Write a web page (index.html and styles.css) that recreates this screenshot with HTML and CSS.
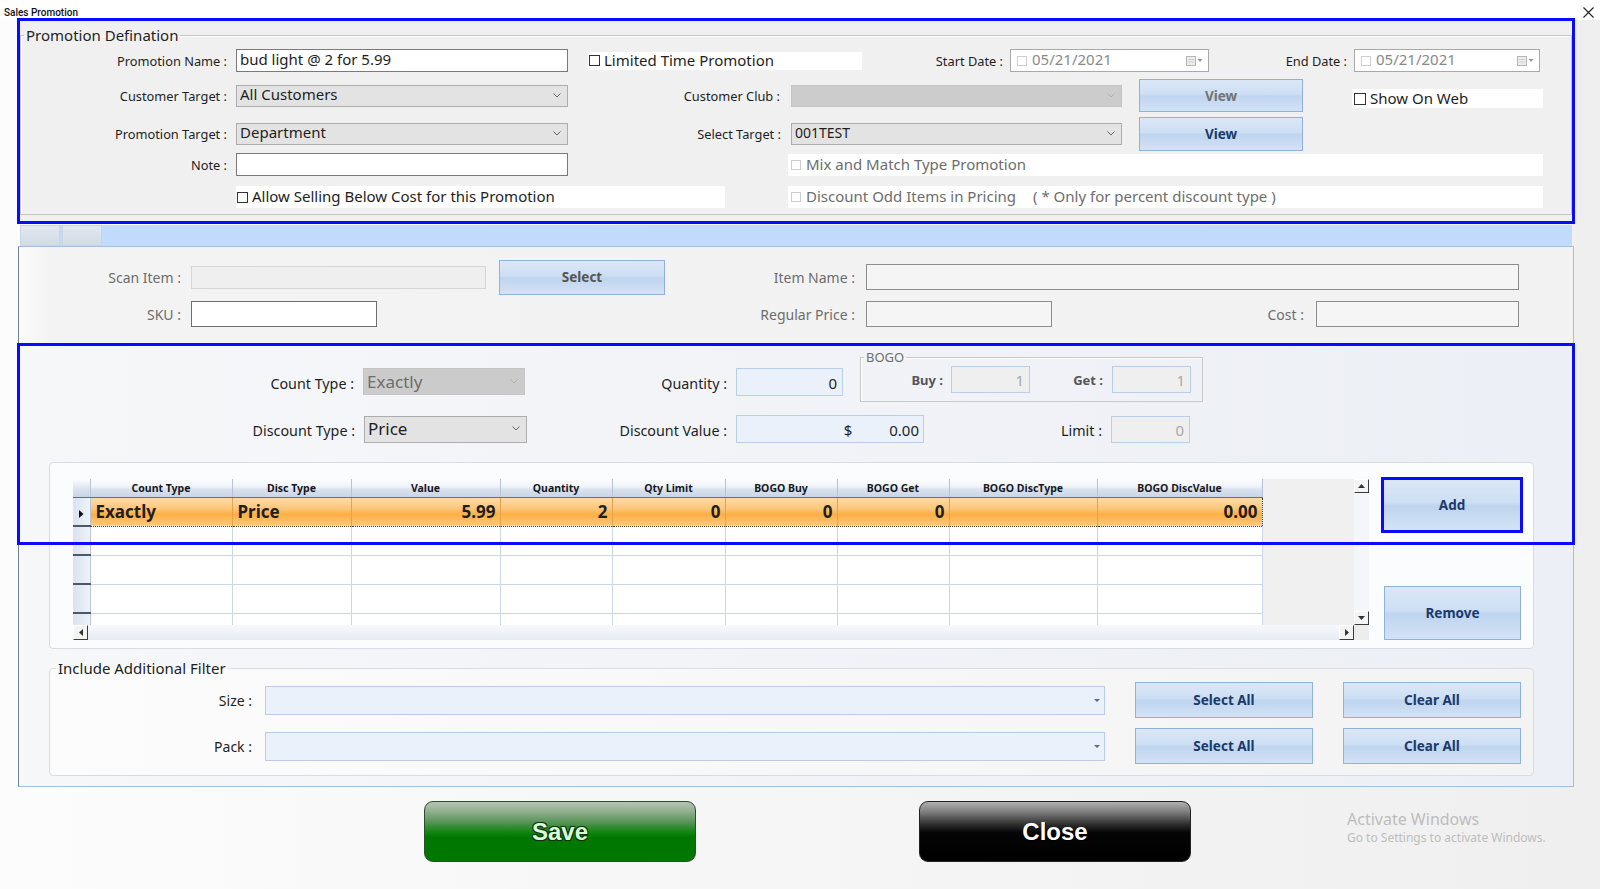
FILE: index.html
```html
<!DOCTYPE html>
<html lang="en">
<head>
  <meta charset="UTF-8">
  <title>Sales Promotion</title>
  <link rel="stylesheet" href="styles.css">
</head>
<body>
  <div class="titlebar">
    <span class="title">Sales Promotion</span>
    <svg class="close-x" width="11" height="11" viewBox="0 0 11 11"><path d="M0.5 0.5 L10.5 10.5 M10.5 0.5 L0.5 10.5" stroke="#222" stroke-width="1.1"/></svg>
  </div>

  <div class="top">
    <fieldset class="group">
      <legend>Promotion Defination</legend>

      <div class="row r1">
        <span class="lbl lbl-name">Promotion Name :</span>
        <div class="txt in-name">bud light @ 2 for 5.99</div>
        <div class="chk chk-limited"><span class="box"></span>Limited Time Promotion</div>
        <span class="lbl lbl-start">Start Date :</span>
        <div class="date date-start">
          <span class="box off"></span><span class="date-val">05/21/2021</span>
          <svg class="cal" width="18" height="10" viewBox="0 0 18 10"><rect x="0.5" y="0.5" width="9" height="9" fill="#ececec" stroke="#b5b5b5"/><path d="M2 3.5 H8 M2 6 H8" stroke="#cfcfcf"/><path d="M11.5 3 H16.5 L14 6 Z" fill="#9a9a9a"/></svg>
        </div>
        <span class="lbl lbl-end">End Date :</span>
        <div class="date date-end">
          <span class="box off"></span><span class="date-val">05/21/2021</span>
          <svg class="cal" width="18" height="10" viewBox="0 0 18 10"><rect x="0.5" y="0.5" width="9" height="9" fill="#ececec" stroke="#b5b5b5"/><path d="M2 3.5 H8 M2 6 H8" stroke="#cfcfcf"/><path d="M11.5 3 H16.5 L14 6 Z" fill="#9a9a9a"/></svg>
        </div>
      </div>

      <div class="row r2">
        <span class="lbl lbl-name">Customer Target :</span>
        <div class="combo in-name">All Customers
          <svg class="chev" width="8" height="5" viewBox="0 0 8 5"><path d="M0.5 0.5 L4 4 L7.5 0.5" fill="none" stroke="#666"/></svg>
        </div>
        <span class="lbl lbl-club">Customer Club :</span>
        <div class="combo off in-club">
          <svg class="chev" width="8" height="5" viewBox="0 0 8 5"><path d="M0.5 0.5 L4 4 L7.5 0.5" fill="none" stroke="#b0b0b0"/></svg>
        </div>
        <div class="btn dim btn-view">View</div>
        <div class="chk chk-web"><span class="box"></span>Show On Web</div>
      </div>

      <div class="row r3">
        <span class="lbl lbl-name">Promotion Target :</span>
        <div class="combo in-name">Department
          <svg class="chev" width="8" height="5" viewBox="0 0 8 5"><path d="M0.5 0.5 L4 4 L7.5 0.5" fill="none" stroke="#666"/></svg>
        </div>
        <span class="lbl lbl-target">Select Target :</span>
        <div class="combo in-club small">001TEST
          <svg class="chev" width="8" height="5" viewBox="0 0 8 5"><path d="M0.5 0.5 L4 4 L7.5 0.5" fill="none" stroke="#666"/></svg>
        </div>
        <div class="btn btn-view tall">View</div>
      </div>

      <div class="row r4">
        <span class="lbl lbl-name">Note :</span>
        <div class="txt in-name"></div>
        <div class="chk off chk-mix"><span class="box"></span>Mix and Match Type Promotion</div>
      </div>

      <div class="row r5">
        <div class="chk chk-allow"><span class="box"></span>Allow Selling Below Cost for this Promotion</div>
        <div class="chk off chk-odd"><span class="box"></span>Discount Odd Items in Pricing<span class="note">( * Only for percent discount type )</span></div>
      </div>
    </fieldset>
  </div>

  <div class="tabstrip">
    <span class="tab"></span>
    <span class="tab"></span>
  </div>

  <div class="tabpage">
    <div class="scan">
      <div class="row ra">
        <span class="slbl w162">Scan Item :</span>
        <div class="sbox off in-scan"></div>
        <div class="btn grey btn-select">Select</div>
        <span class="slbl w190">Item Name :</span>
        <div class="sbox in-item"></div>
      </div>
      <div class="row rb">
        <span class="slbl w162">SKU :</span>
        <div class="sbox white in-sku"></div>
        <span class="slbl w478">Regular Price :</span>
        <div class="sbox in-reg"></div>
        <span class="slbl w252">Cost :</span>
        <div class="sbox in-cost"></div>
      </div>
    </div>

    <div class="promo">
      <div class="row rc">
        <span class="plbl lbl-count">Count Type :</span>
        <div class="pcombo off cb-count">Exactly
          <svg class="chev" width="8" height="5" viewBox="0 0 8 5"><path d="M0.5 0.5 L4 4 L7.5 0.5" fill="none" stroke="#b0b0b0"/></svg>
        </div>
        <span class="plbl lbl-qty">Quantity :</span>
        <div class="num in-qty">0</div>
        <fieldset class="bogo">
          <legend>BOGO</legend>
          <div class="row bogo-row">
            <span class="blbl w82">Buy :</span>
            <div class="num dis in-buy">1</div>
            <span class="blbl w73">Get :</span>
            <div class="num dis in-get">1</div>
          </div>
        </fieldset>
      </div>

      <div class="row rd">
        <span class="plbl lbl-disc">Discount Type :</span>
        <div class="pcombo cb-disc">Price
          <svg class="chev" width="8" height="5" viewBox="0 0 8 5"><path d="M0.5 0.5 L4 4 L7.5 0.5" fill="none" stroke="#666"/></svg>
        </div>
        <span class="plbl lbl-dval">Discount Value :</span>
        <div class="num in-dval"><span class="cur">$</span>0.00</div>
        <span class="plbl lbl-limit">Limit :</span>
        <div class="num dis in-limit">0</div>
      </div>

      <div class="gridbox">
        <div class="grid">
          <div class="grid-main">
            <div class="grid-cells">
              <table class="dg">
                <colgroup>
                  <col style="width:17px"><col style="width:142px"><col style="width:119px"><col style="width:149px"><col style="width:112px"><col style="width:113px"><col style="width:112px"><col style="width:112px"><col style="width:148px"><col style="width:165px">
                </colgroup>
                <thead>
                  <tr>
                    <th class="rh"></th>
                    <th>Count Type</th><th>Disc Type</th><th>Value</th><th>Quantity</th><th>Qty Limit</th><th>BOGO Buy</th><th>BOGO Get</th><th>BOGO DiscType</th><th>BOGO DiscValue</th>
                  </tr>
                </thead>
                <tbody>
                  <tr class="sel">
                    <td class="rh"><svg width="5" height="8" viewBox="0 0 5 8"><path d="M0 0 L4.5 4 L0 8 Z" fill="#111"/></svg></td>
                    <td>Exactly</td><td>Price</td><td class="r">5.99</td><td class="r">2</td><td class="r">0</td><td class="r">0</td><td class="r">0</td><td></td><td class="r">0.00</td>
                  </tr>
                  <tr><td class="rh"></td><td></td><td></td><td></td><td></td><td></td><td></td><td></td><td></td><td></td></tr>
                  <tr><td class="rh"></td><td></td><td></td><td></td><td></td><td></td><td></td><td></td><td></td><td></td></tr>
                  <tr><td class="rh"></td><td></td><td></td><td></td><td></td><td></td><td></td><td></td><td></td><td></td></tr>
                  <tr><td class="rh"></td><td></td><td></td><td></td><td></td><td></td><td></td><td></td><td></td><td></td></tr>
                </tbody>
              </table>
            </div>
            <div class="vscroll">
              <span class="arrow"><svg width="7" height="4" viewBox="0 0 7 4"><path d="M0 4 L3.5 0 L7 4 Z" fill="#333"/></svg></span>
              <span class="arrow"><svg width="7" height="4" viewBox="0 0 7 4"><path d="M0 0 L3.5 4 L7 0 Z" fill="#333"/></svg></span>
            </div>
          </div>
          <div class="grid-foot">
            <div class="hscroll">
              <span class="arrow"><svg width="4" height="7" viewBox="0 0 4 7"><path d="M4 0 L0 3.5 L4 7 Z" fill="#333"/></svg></span>
              <span class="arrow"><svg width="4" height="7" viewBox="0 0 4 7"><path d="M0 0 L4 3.5 L0 7 Z" fill="#333"/></svg></span>
            </div>
            <div class="corner"></div>
          </div>
        </div>
        <div class="side">
          <div class="btn btn-add">Add</div>
          <div class="btn btn-remove">Remove</div>
        </div>
      </div>

      <fieldset class="filter">
        <legend>Include Additional Filter</legend>
        <div class="row re">
          <span class="flbl">Size :</span>
          <div class="fcombo"><svg width="6" height="3" viewBox="0 0 6 3"><path d="M0 0 H6 L3 3 Z" fill="#4f6d99"/></svg></div>
          <div class="btn btn-wide">Select All</div>
          <div class="btn btn-wide">Clear All</div>
        </div>
        <div class="row rf">
          <span class="flbl">Pack :</span>
          <div class="fcombo"><svg width="6" height="3" viewBox="0 0 6 3"><path d="M0 0 H6 L3 3 Z" fill="#4f6d99"/></svg></div>
          <div class="btn btn-wide">Select All</div>
          <div class="btn btn-wide">Clear All</div>
        </div>
      </fieldset>
    </div>
  </div>

  <div class="actions">
    <div class="big save">Save</div>
    <div class="big close">Close</div>
    <div class="activate">
      <div class="act1">Activate Windows</div>
      <div class="act2">Go to Settings to activate Windows.</div>
    </div>
  </div>

  <div class="mark mark1"></div>
  <div class="mark mark2"></div>
</body>
</html>
```

FILE: styles.css
```css
* {
  box-sizing: border-box;
}

body {
  margin: 0;
  width: 1600px;
  height: 889px;
  overflow: hidden;
  position: relative;
  font-family: "Noto Sans", "Open Sans", sans-serif;
  color: #1e1e1e;
  background: linear-gradient(to right, #fcfcfc, #efefef);
}

/* title bar */
.titlebar {
  height: 20px;
  background: #fff;
  display: flex;
  align-items: center;
  justify-content: space-between;
  padding: 4px 6px 0 4px;
}

.title {
  font: 500 10px Roboto, sans-serif;
  color: #111;
}

.close-x {
  display: block;
}

/* promotion definition block */
.top {
  margin-left: 20px;
  width: 1552px;
  height: 202px;
  padding-top: 5px;
  background: #f0f0f0;
}

.group {
  margin: 0;
  padding: 0 0 6px 0;
  min-width: 0;
  border: 1px solid #c4c4c4;
  box-shadow: inset 1px 1px 0 #fff;
}

.group > legend {
  margin-left: 3px;
  padding: 0 2px;
  font-size: 15px;
  line-height: 20px;
}

.row {
  display: flex;
  align-items: center;
}

.r1 { height: 31px; }
.r2 { height: 39px; }
.r3 { height: 37px; }
.r4 { height: 25px; }
.r5 { height: 22px; margin-top: 9px; }

.lbl {
  flex: none;
  font-size: 12.8px;
  text-align: right;
  white-space: nowrap;
}

.lbl-name { width: 206px; }
.lbl-start { width: 141px; }
.lbl-end { width: 138px; }
.lbl-club { width: 212px; }
.lbl-target { width: 213px; }

.txt,
.combo,
.date {
  flex: none;
  display: flex;
  align-items: center;
  font-size: 15px;
  white-space: nowrap;
  padding-bottom: 3px;
}

.txt {
  height: 23px;
  background: #fff;
  border: 1px solid #7a7a7a;
  padding-left: 3px;
}

.in-name {
  margin-left: 9px;
  width: 332px;
}

.combo {
  height: 22px;
  justify-content: space-between;
  background: #e3e3e3;
  border: 1px solid #adadad;
  padding-left: 3px;
  padding-right: 6px;
}

.combo .chev {
  margin-top: 3px;
}

.combo.off {
  background: #cccccc;
  border-color: #c4c4c4;
  justify-content: flex-end;
}

.combo.small {
  font-size: 14px;
}

.in-club {
  margin-left: 11px;
  width: 331px;
}

.lbl-target + .in-club {
  margin-left: 10px;
}

.date {
  height: 23px;
  background: #fff;
  border: 1px solid #a8a8a8;
  padding-left: 6px;
  padding-right: 4px;
  color: #8a8a8a;
}

.date .box,
.date .cal {
  margin-top: 3px;
}

.date .box {
  margin-right: 5px;
}

.date-val {
  flex: 1;
}

.date-start {
  margin-left: 7px;
  width: 199px;
}

.date-end {
  margin-left: 7px;
  width: 186px;
}

.chk {
  flex: none;
  display: flex;
  align-items: center;
  background: #fff;
  font-size: 15px;
  white-space: nowrap;
  padding-left: 1px;
  padding-bottom: 2px;
}

.box {
  flex: none;
  width: 11px;
  height: 11px;
  border: 1px solid #333;
  background: #fff;
  margin-right: 4px;
  margin-top: 2px;
}

.box.off,
.chk.off .box {
  width: 10px;
  height: 10px;
  border-color: #cdcdcd;
}

.chk.off {
  color: #6d6d6d;
  padding-left: 3px;
}

.chk.off .box {
  margin-right: 5px;
}

.chk-limited {
  margin-left: 20px;
  width: 274px;
  height: 18px;
}

.chk-web {
  margin-left: 49px;
  margin-top: 6px;
  width: 191px;
  height: 19px;
  padding-left: 2px;
}

.chk-web .box {
  width: 12px;
  height: 12px;
}

.chk-mix {
  margin-left: 220px;
  width: 755px;
  height: 22px;
}

.chk-allow {
  margin-left: 215px;
  width: 489px;
  height: 22px;
}

.chk-odd {
  margin-left: 63px;
  width: 755px;
  height: 22px;
}

.note {
  margin-left: 17px;
}

/* office style buttons */
.btn {
  flex: none;
  display: flex;
  align-items: center;
  justify-content: center;
  background: linear-gradient(#dbe7f7, #cddff4 45%, #bfd4ef 52%, #d3e3f6);
  border: 1px solid #8fb1dd;
  font-weight: 700;
  font-size: 13.5px;
  color: #1b3a6b;
}

.btn.dim {
  color: #727272;
}

.btn.grey {
  color: #555;
}

.btn-view {
  margin-left: 17px;
  width: 164px;
  height: 33px;
}

.btn-view.tall {
  height: 34px;
}

/* tab control */
.tabstrip {
  margin: 3px 0 0 20px;
  width: 1552px;
  height: 21px;
  background: #c0dbfb;
  display: flex;
  gap: 2px;
}

.tab {
  width: 40px;
  height: 21px;
  background: linear-gradient(#e2e8f0, #d2dbe6);
  border: 1px solid #c8d5e4;
}

.tabpage {
  margin-left: 18px;
  width: 1556px;
  height: 541px;
  border: 1px solid #a4bfdf;
  border-left-color: #6f839b;
  background: #fff;
}

.scan {
  height: 96px;
  padding-top: 11px;
  background: linear-gradient(to right, #fbfbfb, #f3f3f3 2%, #f2f2f2);
}

.ra { height: 38px; }
.rb { height: 36px; }

.slbl {
  flex: none;
  font-size: 14px;
  color: #6d6d6d;
  text-align: right;
  white-space: nowrap;
}

.w162 { width: 162px; }
.w190 { width: 190px; }
.w478 { width: 478px; }
.w252 { width: 252px; }

.sbox {
  flex: none;
  height: 26px;
  background: #f5f5f5;
  border: 1px solid #8c8c8c;
}

.sbox.white {
  background: #fff;
  border-color: #6e6e6e;
}

.sbox.off {
  height: 23px;
  background: #efefef;
  border-color: #d6d6d6;
}

.in-scan { margin-left: 10px; width: 295px; }
.in-item { margin-left: 11px; width: 653px; }
.in-sku { margin-left: 10px; width: 186px; }
.in-reg { margin-left: 11px; width: 186px; }
.in-cost { margin-left: 12px; width: 203px; }

.btn-select {
  margin-left: 13px;
  width: 166px;
  height: 35px;
}

/* promotion detail */
.promo {
  height: 443px;
  padding-top: 5px;
  background: linear-gradient(to right, #f6f7f9, #eceff5);
}

.rc {
  height: 54px;
  align-items: flex-start;
}

.rc > .plbl,
.rc > .pcombo,
.rc > .num {
  margin-top: 20px;
}

.rd {
  height: 28px;
  margin-top: 13px;
}

.plbl {
  flex: none;
  height: 28px;
  line-height: 28px;
  padding-top: 2px;
  font-size: 14.3px;
  text-align: right;
  white-space: nowrap;
}

.lbl-count { width: 335px; }
.lbl-qty { width: 202px; }
.lbl-disc { width: 336px; }
.lbl-dval { width: 200px; }
.lbl-limit { width: 178px; }

.pcombo {
  flex: none;
  height: 27px;
  display: flex;
  align-items: center;
  justify-content: space-between;
  padding: 0 6px 1px 3px;
  font-size: 17px;
  background: #e3e3e3;
  border: 1px solid #adadad;
}

.pcombo.off {
  background: #cbcbcb;
  border-color: #c6c6c6;
  color: #6d6d6d;
}

.cb-count { margin-left: 9px; width: 162px; }
.cb-disc { margin-left: 9px; width: 163px; }

.num {
  flex: none;
  height: 28px;
  display: flex;
  align-items: center;
  justify-content: flex-end;
  padding: 1px 5px 0 0;
  font-size: 15px;
  background: #eaf1fb;
  border: 1px solid #b9cfe9;
}

.num.dis {
  height: 27px;
  background: #efefef;
  color: #a8a8a8;
}

.in-qty { margin-left: 9px; width: 107px; }
.in-dval { margin-left: 9px; width: 188px; padding-right: 4px; }
.in-limit { margin-left: 9px; width: 79px; }
.in-buy { margin-left: 8px; width: 79px; }
.in-get { margin-left: 9px; width: 79px; }

.cur {
  margin-right: 37px;
}

.bogo {
  flex: none;
  margin: 0 0 0 17px;
  padding: 0;
  width: 343px;
  height: 54px;
  min-width: 0;
  border: 1px solid #c9c9c9;
  box-shadow: inset 1px 1px 0 #fff;
}

.bogo > legend {
  margin-left: 3px;
  padding: 0 2px;
  font-size: 13px;
  line-height: 18px;
  color: #6d6d6d;
}

.bogo-row {
  height: 27px;
}

.blbl {
  flex: none;
  text-align: right;
  font-weight: 700;
  font-size: 13px;
  color: #555;
}

.w82 { width: 82px; }
.w73 { width: 73px; }

/* grid */
.gridbox {
  margin: 19px 0 0 30px;
  width: 1485px;
  height: 187px;
  display: flex;
  padding: 16px 0 0 23px;
  background: #fbfcfd;
  border: 1px solid #d7dce4;
  border-radius: 4px;
}

.grid {
  width: 1296px;
  height: 161px;
}

.grid-main {
  display: flex;
  height: 146px;
}

.grid-cells {
  width: 1281px;
  height: 146px;
  overflow: hidden;
  background: #f0f0f0;
}

.dg {
  table-layout: fixed;
  width: 1189px;
  border-collapse: collapse;
}

.dg th {
  height: 18px;
  padding: 0;
  font-weight: 700;
  font-size: 10.5px;
  color: #15181d;
  background: linear-gradient(#fdfdfe, #eef2f8 45%, #dbe3ef 55%, #c9d4e6);
  border-right: 1px solid #b7c3d6;
  border-bottom: 1px solid #5f6f8f;
}

.dg td {
  height: 29px;
  padding: 0 5px;
  background: #fff;
  border-right: 1px solid #cbd7e6;
  border-bottom: 1px solid #cbd7e6;
  font-weight: 700;
  font-size: 17px;
  white-space: nowrap;
}

.dg td.r {
  text-align: right;
  padding-right: 4px;
}

.dg .rh {
  padding: 0;
  background: linear-gradient(to right, #d9e2ee, #eef3f9);
  border-right: 1px solid #b9c6d8;
}

.dg td.rh {
  border-bottom: 2px solid #4e5866;
  text-align: center;
}

.dg th.rh {
  background: linear-gradient(#fdfdfe, #dbe3ef 55%, #c9d4e6);
}

.dg tr.sel td {
  background: linear-gradient(#fddcaa, #fcc77a 40%, #fdae44 60%, #fec97c);
  border-right-color: #e4a44f;
  border-top: 1px dotted #4a3b22;
  border-bottom: 1px dotted #4a3b22;
}

.dg tr.sel td.rh {
  background: linear-gradient(to right, #d9e2ee, #eef3f9);
  border-top: 0;
  border-right-color: #b9c6d8;
  border-bottom: 2px solid #4e5866;
}

.dg tr.sel td:nth-child(2) {
  border-left: 1px dotted #4a3b22;
}

.dg tr.sel td:last-child {
  border-right: 1px dotted #4a3b22;
}

.vscroll {
  width: 15px;
  height: 146px;
  display: flex;
  flex-direction: column;
  justify-content: space-between;
  background: #f4f6fa;
}

.arrow {
  width: 15px;
  height: 14px;
  display: flex;
  align-items: center;
  justify-content: center;
  background: #f3f3f3;
  border: 1px solid #fff;
  border-right-color: #3c3c3c;
  border-bottom-color: #3c3c3c;
}

.grid-foot {
  display: flex;
  height: 15px;
}

.hscroll {
  width: 1281px;
  height: 15px;
  display: flex;
  justify-content: space-between;
  background: linear-gradient(#f6f8fb, #e6ebf3);
}

.hscroll .arrow {
  width: 15px;
  height: 15px;
}

.corner {
  width: 15px;
  height: 15px;
  background: #ededed;
}

.side {
  margin-left: 12px;
  display: flex;
  flex-direction: column;
}

.btn-add {
  margin-top: -2px;
  width: 142px;
  height: 56px;
  border: 3px solid #0a0aff;
}

.btn-remove {
  margin: 53px 0 0 3px;
  width: 137px;
  height: 54px;
}

/* additional filter */
.filter {
  margin: 9px 0 0 30px;
  padding: 0;
  width: 1485px;
  height: 118px;
  min-width: 0;
  border: 1px solid #d7dce4;
  border-radius: 4px;
  background: linear-gradient(to right, #fcfcfd, #f3f3f3);
}

.filter > legend {
  margin-left: 6px;
  padding: 0 2px;
  font-size: 15px;
  line-height: 20px;
}

.re { height: 42px; padding-top: 2px; }
.rf { height: 40px; margin-top: 6px; }

.flbl {
  flex: none;
  width: 202px;
  text-align: right;
  font-size: 14px;
}

.fcombo {
  flex: none;
  margin-left: 13px;
  width: 840px;
  height: 29px;
  display: flex;
  align-items: center;
  justify-content: flex-end;
  padding-right: 4px;
  background: #eaf1fb;
  border: 1px solid #b7cde8;
}

.btn-wide {
  margin-left: 30px;
  width: 178px;
  height: 36px;
}

/* bottom actions */
.actions {
  height: 102px;
  display: flex;
  align-items: flex-start;
  padding-top: 14px;
}

.big {
  flex: none;
  width: 272px;
  height: 61px;
  border-radius: 9px;
  display: flex;
  align-items: center;
  justify-content: center;
  font: 700 24px "Liberation Sans", Arial, sans-serif;
}

.save {
  margin-left: 424px;
  color: #d6ffd6;
  border: 1px solid #2d4d2d;
  background: linear-gradient(#b4c6b4, #93b193 15%, #5d955d 33%, #138613 50%, #007800 60%, #007800);
  text-shadow: 1px 1px 0 #143014, -1px -1px 0 #143014, 1px -1px 0 #143014, -1px 1px 0 #143014;
}

.close {
  margin-left: 223px;
  color: #fff;
  border: 1px solid #222;
  background: linear-gradient(#b0b0b0, #7a7a7a 18%, #2e2e2e 38%, #050505 52%, #000);
  text-shadow: 1px 1px 0 #000;
}

.activate {
  margin: 7px 0 0 156px;
  color: #bdbdbd;
}

.act1 {
  font-size: 16px;
  line-height: 22px;
}

.act2 {
  font-size: 12px;
  line-height: 16px;
}

/* blue highlight marks drawn over the form */
.mark {
  position: absolute;
  left: 17px;
  width: 1558px;
  border: 3px solid #0a0aff;
  pointer-events: none;
}

.mark1 {
  top: 18px;
  height: 206px;
}

.mark2 {
  top: 343px;
  height: 202px;
}
```
